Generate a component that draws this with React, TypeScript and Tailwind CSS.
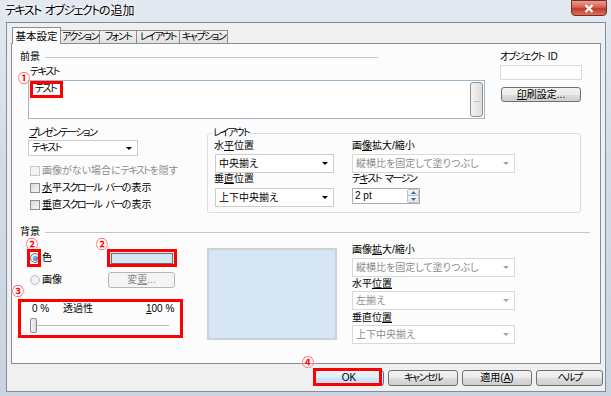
import React from "react";

const F =
  "font-['Liberation_Sans','Noto_Sans_CJK_JP',sans-serif] [font-feature-settings:'palt']";

function J({ t }: { t: string }) {
  const parts = t.split(/([\u30a0-\u30ff]+| )/);
  return (
    <>
      {parts.map((p, i) =>
        p === " " ? (
          <span key={i} className="inline-block w-[4px]" />
        ) : /[\u30a0-\u30ff]/.test(p) ? (
          <span key={i} className="tracking-[-1.5px]">
            {p}
          </span>
        ) : (
          <React.Fragment key={i}>{p}</React.Fragment>
        )
      )}
    </>
  );
}

function Arrow({ gray }: { gray?: boolean }) {
  return (
    <svg width="6" height="3" viewBox="0 0 6 3">
      <path d="M0 0H6L3 3Z" fill={gray ? "#a3a3a3" : "#000"} />
    </svg>
  );
}

function Select({
  text,
  className,
  disabled,
}: {
  text: string;
  className: string;
  disabled?: boolean;
}) {
  return (
    <div
      className={`flex items-center justify-between bg-white border pl-[3px] pr-[5px] ${
        disabled ? "border-[#d9d9d9] text-[#8c8c8c]" : "border-[#cccccc] text-black"
      } ${className}`}
    >
      <span className="leading-[12px] whitespace-nowrap">
        <J t={text} />
      </span>
      <Arrow gray={disabled} />
    </div>
  );
}

function Check({ disabled }: { disabled?: boolean }) {
  return (
    <div
      className={`w-[10px] h-[10px] border ${
        disabled
          ? "border-[#c9c9c9] bg-[#f3f3f3]"
          : "border-[#8e8f8f] bg-[linear-gradient(135deg,#d8d8d8,#f7f7f7)]"
      }`}
    />
  );
}

function Radio({ on }: { on?: boolean }) {
  return (
    <div
      className={`w-[10px] h-[10px] rounded-full border flex items-center justify-center ${
        on ? "border-[#6f7a85] bg-[#e8eef4]" : "border-[#b9bdc1] bg-[#f1f1f1]"
      }`}
    >
      {on && (
        <div className="w-[5px] h-[5px] rounded-full bg-[radial-gradient(circle_at_40%_40%,#7fc0f2,#1f63b5)]" />
      )}
    </div>
  );
}

function Btn({
  children,
  className,
  def,
  disabled,
}: {
  children: React.ReactNode;
  className: string;
  def?: boolean;
  disabled?: boolean;
}) {
  const look = disabled
    ? "border-[#b5b8ba] bg-[#f4f4f4] text-[#8a8a8a]"
    : def
    ? "border-[#3c7fb1] bg-[linear-gradient(#eaf4fc_0%,#dcecf9_50%,#cfe4f6_51%,#c3ddf3_100%)] text-black"
    : "border-[#707070] bg-[linear-gradient(#f2f2f2_0%,#ebebeb_50%,#dddddd_51%,#cfcfcf_100%)] text-black";
  return (
    <div className={`flex items-center justify-center border rounded-[3px] ${look} ${className}`}>
      <span className="leading-[12px] whitespace-nowrap">{children}</span>
    </div>
  );
}

function Num({ n, className }: { n: string; className: string }) {
  return (
    <div
      className={`absolute text-[12px] leading-[12px] font-bold text-[#ff0000] [text-shadow:0_0_2px_#fff,0_0_2px_#fff] ${className}`}
    >
      {n}
    </div>
  );
}

function RedBox({ className }: { className: string }) {
  return <div className={`absolute border-[3px] border-[#ff0000] ${className}`} />;
}

export default function App() {
  return (
    <div
      className={`relative w-[611px] h-[396px] overflow-hidden bg-[linear-gradient(180deg,#e3e9f0_0%,#d3dce6_40%,#c9d4e0_100%)] text-[10px] leading-[12px] text-black ${F}`}
    >
      {/* title bar */}
      <div className="h-[22px] flex justify-between">
        <div className="pl-[5px] flex items-center text-[12px] whitespace-nowrap [text-shadow:0_0_6px_#fff,0_0_3px_#fff]">
          <J t="テキスト オブジェクトの追加" />
        </div>
        <div className="mr-[4px] w-[36px] h-[16px] rounded-b-[4px] border border-[#7c2a22] bg-[linear-gradient(#e8a093_0%,#d4614e_45%,#c0392b_55%,#d9735c_100%)] flex items-center justify-center">
          <svg width="10" height="9" viewBox="0 0 10 9">
            <path d="M1.5 1L8.5 8M8.5 1L1.5 8" stroke="#fff" strokeWidth="2.2" />
          </svg>
        </div>
      </div>

      {/* client */}
      <div className="ml-[6px] w-[600px] h-[370px] border border-[#7f8f9f] bg-[#f0f0f0] flex flex-col">
        {/* tabs */}
        <div className="mt-[4px] ml-[5px] h-[16px] flex items-end whitespace-nowrap">
          <div className="relative z-10 -mb-px h-[17px] w-[49px] border border-b-0 border-[#898c95] bg-[#fcfcfc] flex items-center justify-center text-[10.5px]">
            基本設定
          </div>
          {["アクション", "フォント", "レイアウト", "キャプション"].map((t, i) => (
            <div
              key={t}
              className={`h-[13px] border border-b-0 border-l-0 border-[#898c95] bg-[linear-gradient(#f2f2f2,#e1e1e1)] flex items-center justify-center ${
                ["w-[39px]", "w-[37px]", "w-[43px]", "w-[48px]"][i]
              }`}
            >
              <J t={t} />
            </div>
          ))}
        </div>

        {/* panel */}
        <div className="ml-[4px] w-[590px] h-[321px] border border-[#898c95] bg-[#fcfcfc] pl-[8px] pt-[6px] flex flex-col whitespace-nowrap">
          {/* foreground top */}
          <div className="flex">
            <div className="w-[465px] flex flex-col">
              <div className="h-[14px] w-[358px] flex items-center gap-[5px]">
                <span>前景</span>
                <div className="flex-1 h-px bg-[#c4c8cc]" />
              </div>
              <div className="h-[12px] mt-[2px] ml-[10px]">
                <J t="テキスト" />
              </div>
              <div className="mt-[2px] ml-[8px] w-[457px] h-[39px] border border-[#9fb5cc] bg-white flex justify-between">
                <div className="pl-[6px] pt-[2px]">
                  <J t="テスト" />
                </div>
                <div className="mt-[1px] mr-[1px] w-[13px] h-[35px] border border-[#8e8f8f] rounded-[3px] bg-[linear-gradient(90deg,#f4f4f4,#dcdcdc)] flex items-center justify-center text-[7px] text-[#555]">
                  ...
                </div>
              </div>
            </div>
            <div className="ml-[15px] w-[82px] flex flex-col">
              <div className="h-[14px] flex items-center">
                <J t="オブジェクト ID" />
              </div>
              <div className="mt-[1px] h-[15px] border border-[#d6dbe0] bg-white" />
              <Btn className="mt-[7px] ml-[1px] w-[80px] h-[15px]">
                <span className="underline">印</span>刷設定...
              </Btn>
            </div>
          </div>

          {/* middle */}
          <div className="mt-[8px] flex">
            <div className="ml-[8px] w-[179px] flex flex-col">
              <div className="h-[12px] pl-[1px]">
                <span className="underline">
                  <J t="プ" />
                </span>
                <J t="レゼンテーション" />
              </div>
              <Select text="テキスト" className="mt-[1px] w-[110px] h-[16px]" />
              <div className="mt-[6px] h-[17px] flex items-center gap-[2px] pl-[2px] text-[#8d8d8d]">
                <Check disabled />
                <span>
                  <J t="画像がない場合にテキストを隠す" />
                </span>
              </div>
              <div className="h-[17px] flex items-center gap-[2px] pl-[2px]">
                <Check />
                <span>
                  <span className="underline">水</span>
                  <J t="平スクロール バーの表示" />
                </span>
              </div>
              <div className="h-[17px] flex items-center gap-[2px] pl-[2px]">
                <Check />
                <span>
                  <span className="underline">垂</span>
                  <J t="直スクロール バーの表示" />
                </span>
              </div>
            </div>
            <fieldset className="w-[374px] h-[86px] border border-[#d5dfe5] rounded-[3px] pl-[6px] pb-[5px]">
              <legend className="ml-[-2px] px-[1px] h-[12px] leading-[12px]">
                <J t="レイアウト" />
              </legend>
              <div className="flex">
                <div className="w-[138px] flex flex-col">
                  <div className="mt-[1px] h-[12px]">
                    水<span className="underline">平</span>位置
                  </div>
                  <Select text="中央揃え" className="mt-[2px] ml-[1px] w-[119px] h-[19px]" />
                  <div className="h-[12px]">
                    垂<span className="underline">直</span>位置
                  </div>
                  <Select text="上下中央揃え" className="mt-[3px] ml-[1px] w-[119px] h-[19px]" />
                </div>
                <div className="flex flex-col">
                  <div className="mt-[1px] h-[12px]">
                    画<span className="underline">像</span>拡大/縮小
                  </div>
                  <Select
                    text="縦横比を固定して塗りつぶし"
                    disabled
                    className="mt-[2px] w-[163px] h-[19px]"
                  />
                  <div className="h-[12px]">
                    <J t="テ" />
                    <span className="underline">
                      <J t="キ" />
                    </span>
                    <J t="スト マージン" />
                  </div>
                  <div className="mt-[3px] w-[68px] h-[16px] border border-[#abadb3] bg-white flex justify-between">
                    <span className="pl-[2px] pt-[1px] leading-[12px]">2 pt</span>
                    <div className="w-[12px] flex flex-col">
                      <div className="h-[7px] border border-[#b8c0c8] rounded-t-[2px] bg-[linear-gradient(#f4f8fb,#dfe6ec)] flex items-center justify-center">
                        <svg width="5" height="3" viewBox="0 0 5 3">
                          <path d="M0 3L2.5 0L5 3Z" fill="#3d6a99" />
                        </svg>
                      </div>
                      <div className="h-[7px] border border-t-0 border-[#b8c0c8] rounded-b-[2px] bg-[linear-gradient(#f4f8fb,#dfe6ec)] flex items-center justify-center">
                        <svg width="5" height="3" viewBox="0 0 5 3">
                          <path d="M0 0H5L2.5 3Z" fill="#3d6a99" />
                        </svg>
                      </div>
                    </div>
                  </div>
                </div>
              </div>
            </fieldset>
          </div>

          {/* background header */}
          <div className="mt-[12px] h-[14px] w-[570px] flex items-center gap-[5px]">
            <span>背景</span>
            <div className="flex-1 h-px bg-[#c4c8cc]" />
          </div>

          {/* background body */}
          <div className="flex">
            <div className="w-[187px] pl-[10px] flex flex-col">
              <div className="mt-[10px] h-[18px] flex items-center">
                <div className="w-[78px] flex items-center gap-[2px]">
                  <Radio on />
                  <span>色</span>
                </div>
                <div className="w-[68px] h-[18px] border border-[#8e8f8f] rounded-[2px] bg-[#e8e8e8] flex items-center justify-center">
                  <div className="w-[62px] h-[11px] border border-[#6e6e6e] bg-[#d5e6f6]" />
                </div>
              </div>
              <div className="mt-[5px] h-[16px] flex items-center">
                <div className="w-[78px] flex items-center gap-[2px]">
                  <Radio />
                  <span>画像</span>
                </div>
                <Btn disabled className="w-[67px] h-[16px]">
                  変<span className="underline">更</span>...
                </Btn>
              </div>
              <div className="mt-[15px] h-[12px] flex">
                <span className="ml-[2px] w-[31px]">0 %</span>
                <span className="w-[83px]">透過性</span>
                <span>
                  <span className="underline">1</span>00 %
                </span>
              </div>
              <div className="mt-[3px] w-[139px] h-[15px] flex items-center">
                <div className="w-[7px] h-[15px] border border-[#8a8a8a] rounded-[2px] bg-[linear-gradient(90deg,#f6f6f6,#d9d9d9)]" />
                <div className="flex-1 h-[2px] border-t border-[#b8b8b8] border-b border-b-white" />
              </div>
            </div>
            <div className="mt-[9px] w-[130px] h-[92px] border-2 border-[#d0d0d0] bg-[#d6e6f5]" />
            <div className="ml-[15px] flex flex-col">
              <div className="mt-[5px] h-[12px]">
                画像<span className="underline">拡</span>大/縮小
              </div>
              <Select
                text="縦横比を固定して塗りつぶし"
                disabled
                className="mt-[2px] w-[163px] h-[19px]"
              />
              <div className="mt-[1px] h-[12px]">
                水平<span className="underline">位置</span>
              </div>
              <Select text="左揃え" disabled className="mt-[1px] w-[163px] h-[19px]" />
              <div className="mt-[2px] h-[12px]">
                垂直位<span className="underline">置</span>
              </div>
              <Select text="上下中央揃え" disabled className="mt-[1px] w-[163px] h-[19px]" />
            </div>
          </div>
        </div>

        {/* buttons */}
        <div className="mt-[6px] mr-[2px] flex justify-end gap-[4px]">
          <Btn def className="w-[70px] h-[16px]">
            OK
          </Btn>
          <Btn className="w-[70px] h-[16px]">
            <J t="キャンセル" />
          </Btn>
          <Btn className="w-[70px] h-[16px]">
            適用(<span className="underline">A</span>)
          </Btn>
          <Btn className="w-[67px] h-[16px]">
            <J t="ヘルプ" />
          </Btn>
        </div>
      </div>

      {/* annotations */}
      <Num n="①" className="left-[18px] top-[73px]" />
      <RedBox className="left-[30px] top-[81px] w-[33px] h-[17px]" />
      <Num n="②" className="left-[26px] top-[239px]" />
      <RedBox className="left-[27px] top-[249px] w-[14px] h-[18px]" />
      <Num n="②" className="left-[96px] top-[239px]" />
      <RedBox className="left-[107px] top-[249px] w-[70px] h-[18px]" />
      <Num n="③" className="left-[12px] top-[286px]" />
      <RedBox className="left-[18px] top-[299px] w-[165px] h-[39px]" />
      <Num n="④" className="left-[302px] top-[357px]" />
      <RedBox className="left-[313px] top-[368px] w-[69px] h-[18px]" />
    </div>
  );
}
